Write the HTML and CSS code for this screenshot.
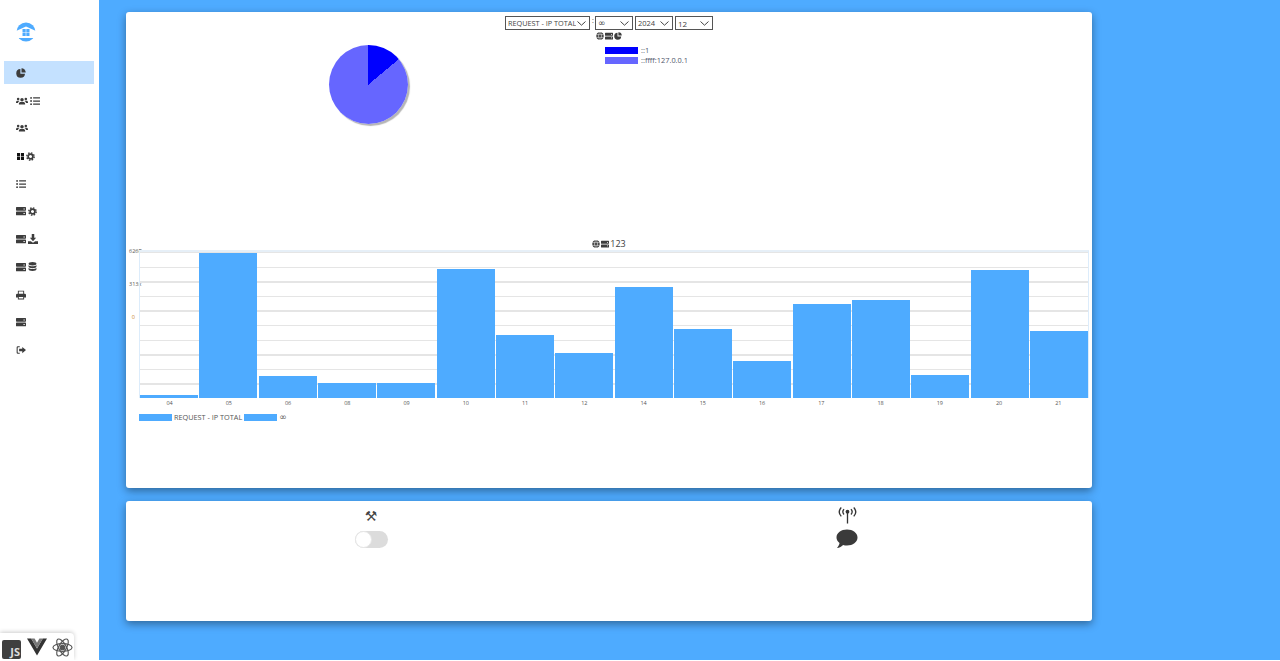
FILE: index.html
```html
<!DOCTYPE html>
<html lang="en">
<head>
    <meta charset="UTF-8">
    <meta name="viewport" content="width=device-width, initial-scale=1">
    <title>Dashboard</title>
    <link rel="stylesheet" href="styles.css">
</head>
<body>
    <!-- icon sprite -->
    <svg class="sprite" xmlns="http://www.w3.org/2000/svg">
        <symbol id="i-pie" viewBox="0 0 16 16"><path d="M7 1.6A7 7 0 1 0 14.4 9H7z"/><path d="M8.8.4a6.8 6.8 0 0 1 6.8 6.8H8.8z"/></symbol>
        <symbol id="i-users" viewBox="0 0 20 16"><circle cx="10" cy="6" r="2.9"/><circle cx="3.6" cy="4.6" r="2.1"/><circle cx="16.4" cy="4.6" r="2.1"/><path d="M4.8 14v-1.6C4.8 10.4 6.400 9.600 8 9.600h4c1.600 0 3.200.8 3.200 2.800V14zM0 10.500C0 8.500 1 7.500 2.500 7.500h2c.5 0 1 .2 1.400.5-1.500.7-2.400 1.800-2.600 3.200H0zM20 10.500c0-2-1-3-2.500-3h-2c-.5 0-1 .2-1.400.5 1.500.7 2.400 1.800 2.600 3.200H20z"/></symbol>
        <symbol id="i-list" viewBox="0 0 16 16"><circle cx="1.700" cy="3" r="1.500"/><circle cx="1.700" cy="8" r="1.500"/><circle cx="1.700" cy="13" r="1.500"/><path d="M5 2h11v2H5zM5 7h11v2H5zM5 12h11v2H5z"/></symbol>
        <symbol id="i-grid" viewBox="0 0 16 16"><path d="M0 0h7v7.400H0zM9 0h7v7.400H9zM0 8.600h7V16H0zM9 8.600h7V16H9z"/></symbol>
        <symbol id="i-cog" viewBox="0 0 16 16"><circle cx="8" cy="8" r="4.200" fill="none" stroke="currentColor" stroke-width="3"/><circle cx="8" cy="8" r="6.500" fill="none" stroke="currentColor" stroke-width="2.600" stroke-dasharray="2.700 2.400"/></symbol>
        <symbol id="i-server" viewBox="0 0 16 16"><path fill-rule="evenodd" d="M1 1.500h14a1 1 0 0 1 1 1v4a1 1 0 0 1-1 1H1a1 1 0 0 1-1-1v-4a1 1 0 0 1 1-1zm11 2.500v1.500h2V4zM1 8.800h14a1 1 0 0 1 1 1v4a1 1 0 0 1-1 1H1a1 1 0 0 1-1-1v-4a1 1 0 0 1 1-1zm11 2.400v1.500h2v-1.500z"/></symbol>
        <symbol id="i-download" viewBox="0 0 16 16"><path d="M6 0h4v6h3l-5 5.500L3 6h3zM0 11.500h4.500L8 14l3.500-2.500H16V16H0z"/></symbol>
        <symbol id="i-database" viewBox="0 0 16 16"><ellipse cx="8" cy="3" rx="7" ry="3"/><path d="M1 5.200C2.500 7 5 7.500 8 7.500s5.500-.5 7-2.300v2.700c0 1.700-3 3-7 3s-7-1.300-7-3zM1 10c1.500 1.800 4 2.300 7 2.300s5.500-.5 7-2.300v3c0 1.700-3 3-7 3s-7-1.300-7-3z"/></symbol>
        <symbol id="i-print" viewBox="0 0 16 16"><path fill-rule="evenodd" d="M3 1h10v5h1a2 2 0 0 1 2 2v4h-3v3H3v-3H0V8a2 2 0 0 1 2-2h1zm1.500 1.500V6h7V2.500zM4.500 11v2.500h7V11z"/></symbol>
        <symbol id="i-signout" viewBox="0 0 16 16"><path d="M6 2H3a2 2 0 0 0-2 2v8a2 2 0 0 0 2 2h3v-1.700H3.400a.7.7 0 0 1-.7-.7V4.400c0-.4.3-.7.7-.7H6zM10 3l6 5-6 5V10H5V6h5z"/></symbol>
        <symbol id="i-globe" viewBox="0 0 16 16"><circle cx="8" cy="8" r="7.500"/><path d="M0 5.300h16M0 10.700h16M8 .5c-4 4-4 11 0 15M8 .5c4 4 4 11 0 15" fill="none" stroke="#fff" stroke-width="1"/></symbol>
        <symbol id="i-comment" viewBox="0 0 22 20"><path d="M11 .5c5.800 0 10.500 3.500 10.500 8S16.800 16.500 11 16.500c-1.400 0-2.700-.2-3.900-.6C5.800 17.300 3.500 19 1 19c1.300-1.500 2.400-3.300 2.500-5C1.600 12.500.5 10.600.5 8.500c0-4.500 4.700-8 10.500-8z"/></symbol>
        <symbol id="i-antenna" viewBox="0 0 20 18"><circle cx="10" cy="5" r="2"/><path d="M9.300 5h1.400v12.500H9.300z"/><path d="M6.300 2.200c-1.500 1.700-1.500 4 0 5.700M13.700 2.200c1.500 1.700 1.500 4 0 5.700M3.400.6c-2.600 2.800-2.600 6.500 0 9.300M16.600.6c2.600 2.800 2.600 6.500 0 9.300" fill="none" stroke="currentColor" stroke-width="1.400"/></symbol>
    </svg>

    <div class="app">
        <aside class="sidebar">
            <div class="logo">
                <svg viewBox="0 0 20 20" width="20" height="20">
                    <circle cx="10" cy="10" r="9.500" fill="#4eabff"/>
                    <path d="M0 9 10 4.500 20 9v7H0z" fill="#fff"/>
                    <path d="M6.500 7h3.200v3.200H6.500zM10.300 7h3.200v3.200h-3.200zM6.500 10.800h3.200V14H6.500zM10.300 10.800h3.200V14h-3.200z" fill="#4eabff"/>
                </svg>
            </div>
            <nav class="nav">
                <a class="nav-item active"><svg class="ic"><use href="#i-pie"/></svg></a>
                <a class="nav-item"><svg class="ic wide"><use href="#i-users"/></svg><svg class="ic"><use href="#i-list"/></svg></a>
                <a class="nav-item"><svg class="ic wide"><use href="#i-users"/></svg></a>
                <a class="nav-item"><svg class="ic small"><use href="#i-grid"/></svg><svg class="ic cog"><use href="#i-cog"/></svg></a>
                <a class="nav-item"><svg class="ic"><use href="#i-list"/></svg></a>
                <a class="nav-item"><svg class="ic"><use href="#i-server"/></svg><svg class="ic cog"><use href="#i-cog"/></svg></a>
                <a class="nav-item"><svg class="ic"><use href="#i-server"/></svg><svg class="ic"><use href="#i-download"/></svg></a>
                <a class="nav-item"><svg class="ic"><use href="#i-server"/></svg><svg class="ic cog"><use href="#i-database"/></svg></a>
                <a class="nav-item"><svg class="ic"><use href="#i-print"/></svg></a>
                <a class="nav-item"><svg class="ic"><use href="#i-server"/></svg></a>
                <a class="nav-item"><svg class="ic"><use href="#i-signout"/></svg></a>
            </nav>
            <div class="stack-tabs">
                <span class="js-badge">JS</span>
                <svg viewBox="0 0 20 18" width="20" height="18" class="vue"><path d="M0 .5h4.200L10 10.500 15.800.5H20L10 17.500z" fill="#333"/><path d="M4.200.5H7.600L10 4.700 12.400.5h3.400L10 10.500z" fill="#777"/></svg>
                <svg viewBox="0 0 22 22" width="21" height="21" class="atom">
                    <circle cx="11" cy="11" r="2.400" fill="#555"/>
                    <ellipse cx="11" cy="11" rx="10" ry="4"/>
                    <ellipse cx="11" cy="11" rx="10" ry="4" transform="rotate(60 11 11)"/>
                    <ellipse cx="11" cy="11" rx="10" ry="4" transform="rotate(120 11 11)"/>
                </svg>
            </div>
        </aside>

        <main class="main">
            <section class="card card-stats">
                <div class="filters">
                    <select class="sel sel-type"><option>REQUEST - IP TOTAL</option></select>
                    <span class="colon">:</span>
                    <select class="sel sel-inf"><option>∞</option></select>
                    <select class="sel sel-year"><option>2024</option></select>
                    <select class="sel sel-month"><option>12</option></select>
                </div>
                <div class="chart-title"><svg class="ic-t"><use href="#i-globe"/></svg><svg class="ic-t"><use href="#i-server"/></svg><svg class="ic-t"><use href="#i-pie"/></svg></div>
                <div class="pie-row">
                    <div class="pie-col"><div class="pie"></div></div>
                    <ul class="pie-legend">
                        <li><span class="swatch swatch-a"></span>::1</li>
                        <li><span class="swatch swatch-b"></span>::ffff:127.0.0.1</li>
                    </ul>
                </div>
                <div class="chart-title bar-title"><svg class="ic-t"><use href="#i-globe"/></svg><svg class="ic-t"><use href="#i-server"/></svg><span>123</span></div>
                <div class="bar-chart">
                    <div class="y-axis">
                        <span>626P</span>
                        <span>313x</span>
                        <span class="zero">0</span>
                    </div>
                    <div class="plot">
                        <div class="bar" style="height:3px"></div>
                        <div class="bar" style="height:145px"></div>
                        <div class="bar" style="height:22px"></div>
                        <div class="bar" style="height:15px"></div>
                        <div class="bar" style="height:15px"></div>
                        <div class="bar" style="height:129px"></div>
                        <div class="bar" style="height:63px"></div>
                        <div class="bar" style="height:45px"></div>
                        <div class="bar" style="height:111px"></div>
                        <div class="bar" style="height:69px"></div>
                        <div class="bar" style="height:37px"></div>
                        <div class="bar" style="height:94px"></div>
                        <div class="bar" style="height:98px"></div>
                        <div class="bar" style="height:23px"></div>
                        <div class="bar" style="height:128px"></div>
                        <div class="bar" style="height:67px"></div>
                    </div>
                    <div class="x-axis">
                        <span>04</span><span>05</span><span>06</span><span>08</span>
                        <span>09</span><span>10</span><span>11</span><span>12</span>
                        <span>14</span><span>15</span><span>16</span><span>17</span>
                        <span>18</span><span>19</span><span>20</span><span>21</span>
                    </div>
                </div>
                <div class="bar-legend">
                    <span class="swatch swatch-c"></span><span>REQUEST - IP TOTAL</span>
                    <span class="swatch swatch-c"></span><span class="inf">∞</span>
                </div>
            </section>

            <section class="card card-tools">
                <div class="tool-col">
                    <span class="hammer">⚒</span>
                    <label class="toggle"><span class="knob"></span></label>
                </div>
                <div class="tool-col">
                    <svg class="ic-antenna"><use href="#i-antenna"/></svg>
                    <svg class="ic-comment"><use href="#i-comment"/></svg>
                </div>
            </section>
        </main>
    </div>
</body>
</html>
```

FILE: styles.css
```css
html {
    background: #fff;
}
body {
    margin: 0;
    font-family: "Open Sans", Arial, sans-serif;
    color: #444;
}
svg {
    fill: currentColor;
}
.sprite {
    display: none;
}
.app {
    display: flex;
    height: 660px;
    overflow: hidden;
}

/* sidebar */
.sidebar {
    width: 99px;
    flex-shrink: 0;
    background: #fff;
    position: relative;
}
.logo {
    height: 61px;
    padding: 22px 0 0 16px;
    box-sizing: border-box;
}
.nav {
    display: flex;
    flex-direction: column;
    gap: 4.7px;
    margin-left: 4px;
    width: 90px;
}
.nav-item {
    display: flex;
    align-items: center;
    gap: 2px;
    height: 23px;
    padding: 1px 0 0 12px;
    box-sizing: border-box;
    color: #3d3d3d;
}
.nav-item.active {
    background: #c4e1ff;
    padding-top: 0;
}
.ic {
    width: 10px;
    height: 10px;
}
.ic.wide {
    width: 12px;
}
.ic.cog {
    width: 9px;
    height: 9px;
}
.ic.small {
    width: 7px;
    height: 7px;
    margin-left: 1px;
    color: #111;
}
.stack-tabs {
    position: absolute;
    left: 0;
    bottom: 0;
    width: 74px;
    height: 27px;
    display: flex;
    align-items: center;
    gap: 6px;
    padding-left: 2px;
    box-sizing: border-box;
    background: #fff;
    border-radius: 0 4px 0 0;
    box-shadow: 0 -1px 4px rgba(0,0,0,0.2);
}
.js-badge {
    width: 19px;
    height: 19px;
    margin-top: 5px;
    background: #3f3f3f;
    color: #ddd;
    border-radius: 2px;
    font-size: 11px;
    font-weight: 700;
    line-height: 12px;
    text-align: right;
    padding: 6px 1px 0 0;
    box-sizing: border-box;
}
.vue {
    margin-top: 1px;
}
.atom {
    margin: 1px 0 0 -1px;
    fill: none;
    stroke: #555;
    stroke-width: 1.200;
}

/* main area */
.main {
    flex: 1;
    background: #4eabff;
    padding: 12px 0 0 27px;
    display: flex;
    flex-direction: column;
    gap: 13px;
}
.card {
    width: 966px;
    box-sizing: border-box;
    background: #fff;
    border-radius: 3px;
    box-shadow: 0 3px 9px rgba(0,0,0,0.4);
}
.card-stats {
    height: 476px;
    padding-top: 4px;
}
.card-tools {
    height: 120px;
    padding: 5px 7px 0;
    display: grid;
    grid-template-columns: 1fr 1fr;
}

/* filters */
.filters {
    display: flex;
    justify-content: center;
    gap: 2px;
    height: 14px;
}
.sel {
    appearance: none;
    -webkit-appearance: none;
    height: 14px;
    padding: 0 13px 0 2px;
    border: 1px solid #555;
    border-radius: 0;
    background: #fff url("data:image/svg+xml,%3Csvg xmlns='http://www.w3.org/2000/svg' width='9' height='5'%3E%3Cpath d='M.5.5 4.500 4.200 8.500.5' fill='none' stroke='%23444' stroke-width='1'/%3E%3C/svg%3E") no-repeat right 3px center;
    color: #444;
    font-family: inherit;
    font-size: 7.3px;
}
.sel-type { width: 85px; }
.sel-inf { width: 38px; font-family: "DejaVu Sans", sans-serif; font-size: 9px; }
.sel-year { width: 38px; font-size: 7.5px; }
.sel-month { width: 38px; font-size: 8px; }
.colon {
    width: 1px;
    font-size: 7px;
    line-height: 9px;
}

.chart-title {
    display: flex;
    justify-content: center;
    align-items: center;
    gap: 1px;
    height: 10px;
    margin-top: 1px;
    color: #3d3d3d;
    font-size: 9px;
}
.ic-t {
    width: 8px;
    height: 8px;
}

/* pie */
.pie-row {
    display: flex;
    height: 196px;
    padding-top: 4px;
    box-sizing: border-box;
}
.pie-col {
    width: 483px;
    padding-left: 1px;
    box-sizing: border-box;
    display: flex;
    justify-content: center;
}
.pie {
    width: 79px;
    height: 79px;
    border-radius: 50%;
    background: conic-gradient(#0000ff 0 50deg, #6666ff 50deg 360deg);
    box-shadow: 2px 2px 1px #b5b5b5;
}
.pie-legend {
    list-style: none;
    margin: 0 0 0 -4px;
    padding: 0;
    font-size: 7.4px;
    line-height: 10px;
    color: #50566a;
}
.pie-legend li {
    display: flex;
    align-items: center;
    gap: 3px;
}
.swatch {
    display: inline-block;
    width: 33px;
    height: 7px;
    flex-shrink: 0;
}
.swatch-a { background: #0000ff; }
.swatch-b { background: #6666ff; }
.swatch-c { background: #4eabff; }

/* bar chart */
.bar-title {
    margin-top: 1px;
    height: 11px;
}
.bar-chart {
    display: grid;
    grid-template-columns: 13px 950px;
    grid-template-rows: 148px 10px;
    margin-top: 1px;
}
.y-axis {
    grid-row: 1;
    display: flex;
    flex-direction: column;
    gap: 27px;
    margin-top: -2px;
    font-size: 5.5px;
    line-height: 6px;
    color: #555;
    text-align: right;
    padding-left: 3px;
    white-space: nowrap;
}
.y-axis .zero {
    color: #c8801c;
    padding-right: 4px;
}
.plot {
    grid-row: 1;
    display: flex;
    align-items: flex-end;
    gap: 1.300px;
    box-sizing: border-box;
    border-top: 2px solid #e6eff7;
    border-left: 1px solid #dcecfb;
    border-right: 1px solid #dcecfb;
    background: repeating-linear-gradient(to bottom, #e5e5e5 0 1.400px, transparent 1.400px 14.600px);
}
.bar {
    flex: 1;
    background: #4eabff;
}
.x-axis {
    grid-column: 2;
    display: flex;
    padding: 1px 1px 0;
    font-size: 5.5px;
    line-height: 9px;
    color: #555;
}
.x-axis span {
    flex: 1;
    text-align: center;
}
.bar-legend {
    display: flex;
    align-items: center;
    gap: 2px;
    margin: 5px 0 0 13px;
    font-size: 7.3px;
    line-height: 9px;
    color: #555;
}
.inf {
    font-family: "DejaVu Sans", sans-serif;
    font-size: 9px;
}

/* tools card */
.tool-col {
    display: flex;
    flex-direction: column;
    align-items: center;
}
.hammer {
    height: 24px;
    font-family: "DejaVu Sans", sans-serif;
    font-size: 14px;
    line-height: 20px;
    color: #444;
}
.toggle {
    width: 33px;
    height: 17px;
    margin-top: 1px;
    border-radius: 9px;
    background: #dcdcdc;
    display: block;
}
.knob {
    display: block;
    width: 17px;
    height: 17px;
    box-sizing: border-box;
    background: #fff;
    border: 1px solid #e6e6e6;
    border-radius: 50%;
}
.ic-antenna {
    width: 19px;
    height: 17px;
    margin-top: 1px;
    color: #333;
}
.ic-comment {
    width: 22px;
    height: 20px;
    margin-top: 5px;
    color: #3a3a3a;
}
```
